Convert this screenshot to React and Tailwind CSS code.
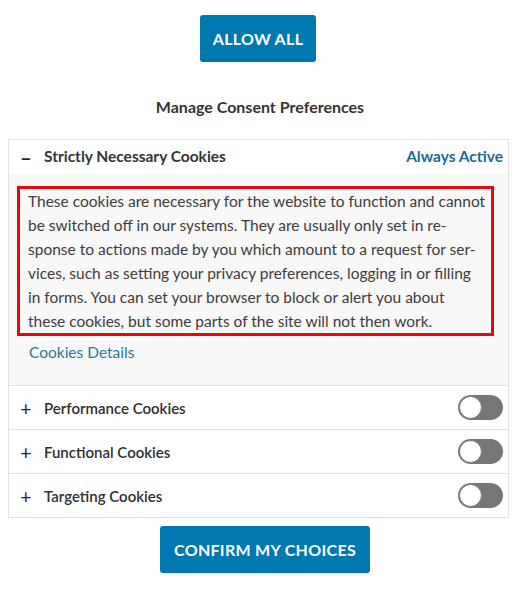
import React from 'react';

const font = { fontFamily: 'Lato, "Open Sans", sans-serif' };

const Toggle = () => (
  <span className="relative inline-flex h-[25px] w-[45px] items-center rounded-full bg-[#767676]">
    <span className="ml-[1px] h-[23px] w-[23px] rounded-full border border-[#767676] bg-white" />
  </span>
);

const CategoryRow = ({ title }) => (
  <div className="flex h-[44px] items-center border-t border-[#e2e2e2] pl-[11px] pr-[5px]">
    <span className="w-[24px] text-[20px] font-normal leading-none text-[#1f2b38]">+</span>
    <span className="flex-1 text-[15px] font-semibold text-[#2e2e2e]">{title}</span>
    <Toggle />
  </div>
);

export default function App() {
  return (
    <div className="min-h-[593px] w-[520px] bg-white text-[#3c3c3c]" style={font}>
      <div className="flex justify-center pt-[15px] pr-[4px]">
        <button className="h-[47px] w-[116px] rounded-[3px] bg-[#0078b0] text-[16px] font-bold tracking-[0.3px] text-white">
          ALLOW ALL
        </button>
      </div>

      <h3 className="mt-[33px] text-center text-[16px] font-bold text-[#333]">
        Manage Consent Preferences
      </h3>

      <div className="ml-[8px] mt-[20px] w-[501px] border border-[#e2e2e2]">
        <div className="flex h-[34px] items-center pl-[11px] pr-[5px]">
          <span className="w-[24px] text-[20px] font-bold leading-none text-[#1f2b38]">–</span>
          <span className="flex-1 text-[15.5px] font-bold text-[#333]">Strictly Necessary Cookies</span>
          <span className="text-[15.5px] font-bold text-[#1c6a8c]">Always Active</span>
        </div>

        <div className="bg-[#f8f8f8] pb-[21px] pl-[8px] pt-[12px]">
          <p className="w-[477px] whitespace-nowrap border-[3px] border-[#e00a0a] pl-[8px] text-[15.5px] leading-[24px] text-[#3c3c3c]">
            These cookies are necessary for the website to function and cannot
            <br />
            be switched off in our systems. They are usually only set in re-
            <br />
            sponse to actions made by you which amount to a request for ser-
            <br />
            vices, such as setting your privacy preferences, logging in or filling
            <br />
            in forms. You can set your browser to block or alert you about
            <br />
            these cookies, but some parts of the site will not then work.
          </p>
          <a className="mt-[5px] block pl-[12px] text-[15.5px] text-[#2b7896]">Cookies Details</a>
        </div>

        <CategoryRow title="Performance Cookies" />
        <CategoryRow title="Functional Cookies" />
        <CategoryRow title="Targeting Cookies" />
      </div>

      <div className="flex justify-center pl-[10px] pt-[8px]">
        <button className="h-[47px] w-[210px] rounded-[3px] bg-[#0078b0] text-[16px] font-bold tracking-[0.3px] text-white">
          CONFIRM MY CHOICES
        </button>
      </div>
    </div>
  );
}
